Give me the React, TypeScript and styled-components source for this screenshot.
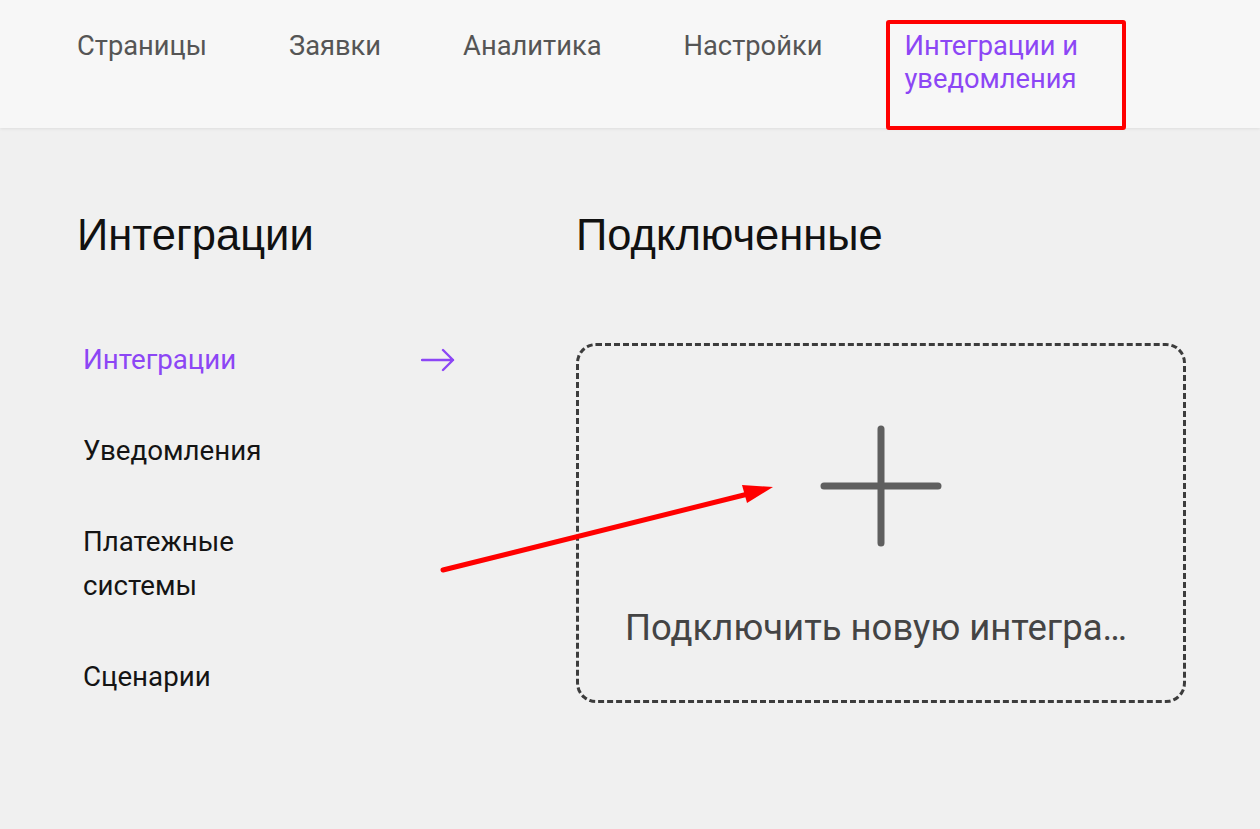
import { createGlobalStyle } from "styled-components";
import styled from "styled-components";

const GlobalStyle = createGlobalStyle`
  html, body {
    margin: 0;
    padding: 0;
    background: #f0f0f0;
  }
  body {
    font-family: Roboto, "Noto Sans", sans-serif;
  }
`;

const Page = styled.div`
  position: relative;
  min-height: 829px;
  background: #f0f0f0;
  overflow: hidden;
`;

const Header = styled.header`
  height: 128px;
  box-sizing: border-box;
  background: #f7f7f7;
  box-shadow: 0 1px 3px rgba(0, 0, 0, 0.08);
  padding: 30px 0 0 77px;
`;

const Nav = styled.nav`
  display: flex;
  align-items: flex-start;
  gap: 82px;
`;

const NavLink = styled.a<{ $active?: boolean }>`
  position: relative;
  display: block;
  max-width: 200px;
  font-size: 27.3px;
  line-height: 33px;
  font-weight: 400;
  color: ${(p) => (p.$active ? "#8c46f5" : "#555555")};
  text-decoration: none;
  cursor: pointer;
`;

const Highlight = styled.span`
  position: absolute;
  left: -18px;
  top: -10px;
  width: 240px;
  height: 110px;
  box-sizing: border-box;
  border: 4px solid #ff0000;
  border-radius: 3px;
  pointer-events: none;
`;

const Main = styled.main`
  display: grid;
  grid-template-columns: 499px 610px;
  padding: 81px 0 0 77px;
`;

const Column = styled.section`
  display: flex;
  flex-direction: column;
`;

const Title = styled.h1<{ $gap: number }>`
  margin: 0 0 ${(p) => p.$gap}px 0;
  font-family: "Liberation Sans", Arial, sans-serif;
  font-size: 43.5px;
  line-height: 52px;
  font-weight: 400;
  color: #111111;
`;

const Menu = styled.ul`
  list-style: none;
  margin: 0;
  padding: 0 0 0 6px;
  display: flex;
  flex-direction: column;
  gap: 47px;
  width: 372px;
`;

const MenuItem = styled.li<{ $active?: boolean }>`
  display: flex;
  align-items: flex-start;
  justify-content: space-between;
  font-size: 27.7px;
  line-height: 44px;
  font-weight: 400;
  color: ${(p) => (p.$active ? "#8c46f5" : "#141414")};
  cursor: pointer;
`;

const MenuText = styled.span`
  max-width: 240px;
`;

const ArrowIcon = styled.svg`
  width: 34px;
  height: 24px;
  margin-top: 10px;
  flex: none;
`;

const AddCard = styled.button`
  width: 610px;
  height: 360px;
  box-sizing: border-box;
  border: 3px dashed #3c3c3c;
  border-radius: 20px;
  background: transparent;
  display: flex;
  flex-direction: column;
  align-items: center;
  gap: 60px;
  padding: 79px 46px 0;
  cursor: pointer;
  font-family: inherit;
`;

const PlusIcon = styled.svg`
  width: 122px;
  height: 122px;
  flex: none;
`;

const AddLabel = styled.span`
  display: block;
  width: 100%;
  font-size: 36.5px;
  line-height: 42px;
  color: #444444;
  white-space: nowrap;
  overflow: hidden;
  text-overflow: ellipsis;
  text-align: left;
`;

const Annotation = styled.svg`
  position: absolute;
  left: 0;
  top: 0;
  width: 1260px;
  height: 829px;
  pointer-events: none;
`;

const navItems = ["Страницы", "Заявки", "Аналитика", "Настройки"];
const menuItems = ["Интеграции", "Уведомления", "Платежные системы", "Сценарии"];

export default function App() {
  return (
    <Page>
      <GlobalStyle />
      <Header>
        <Nav>
          {navItems.map((item) => (
            <NavLink key={item}>{item}</NavLink>
          ))}
          <NavLink $active>
            Интеграции и уведомления
            <Highlight />
          </NavLink>
        </Nav>
      </Header>
      <Main>
        <Column>
          <Title $gap={77}>Интеграции</Title>
          <Menu>
            {menuItems.map((item, i) => (
              <MenuItem key={item} $active={i === 0}>
                <MenuText>{item}</MenuText>
                {i === 0 && (
                  <ArrowIcon viewBox="0 0 34 24" fill="none">
                    <path
                      d="M1 12H32M22 2L32 12L22 22"
                      stroke="#8c46f5"
                      strokeWidth="2.4"
                      strokeLinecap="round"
                      strokeLinejoin="round"
                    />
                  </ArrowIcon>
                )}
              </MenuItem>
            ))}
          </Menu>
        </Column>
        <Column>
          <Title $gap={82}>Подключенные</Title>
          <AddCard>
            <PlusIcon viewBox="0 0 122 122" fill="none">
              <path
                d="M61 4V118M4 61H118"
                stroke="#5f5f5f"
                strokeWidth="7"
                strokeLinecap="round"
              />
            </PlusIcon>
            <AddLabel>Подключить новую интеграцию</AddLabel>
          </AddCard>
        </Column>
      </Main>
      <Annotation viewBox="0 0 1260 829">
        <line x1="443" y1="570" x2="748" y2="494" stroke="#ff0000" strokeWidth="5" strokeLinecap="round" />
        <polygon points="773,487 742,485 747,503" fill="#ff0000" />
      </Annotation>
    </Page>
  );
}
